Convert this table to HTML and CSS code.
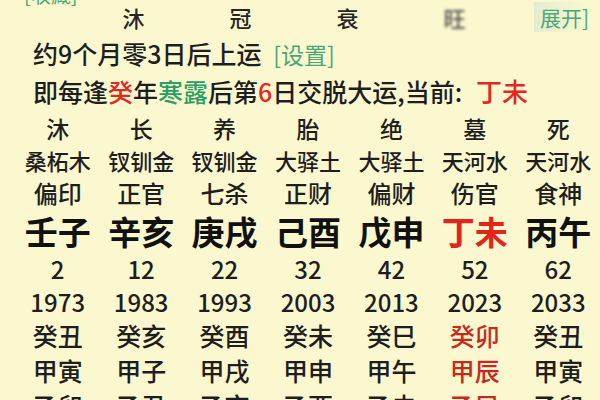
FILE: index.html
```html
<!DOCTYPE html>
<html lang="zh">
<head>
<meta charset="utf-8">
<link rel="stylesheet" href="styles.css">
</head>
<body>
<div class="page">
  <div class="hdr">
    <span class="tag fav">[收藏]</span>
    <span class="hc">沐</span>
    <span class="hc">冠</span>
    <span class="hc">衰</span>
    <span class="hc blur">旺</span>
    <span class="tag open">展开]</span>
  </div>
  <div class="line l1">约9个月零3日后上运 <span class="set">[设置]</span></div>
  <div class="line l2">即每逢<span class="red">癸</span>年<span class="green">寒露</span>后第<span class="red">6</span>日交脱大运,当前: <span class="cur">丁未</span></div>
  <div class="grid">
    <span class="c r1">沐</span><span class="c r1">长</span><span class="c r1">养</span><span class="c r1">胎</span><span class="c r1">绝</span><span class="c r1">墓</span><span class="c r1">死</span>
    <span class="c r2">桑柘木</span><span class="c r2">钗钏金</span><span class="c r2">钗钏金</span><span class="c r2">大驿土</span><span class="c r2">大驿土</span><span class="c r2">天河水</span><span class="c r2">天河水</span>
    <span class="c r3">偏印</span><span class="c r3">正官</span><span class="c r3">七杀</span><span class="c r3">正财</span><span class="c r3">偏财</span><span class="c r3">伤官</span><span class="c r3">食神</span>
    <span class="c r4">壬子</span><span class="c r4">辛亥</span><span class="c r4">庚戌</span><span class="c r4">己酉</span><span class="c r4">戊申</span><span class="c r4 hot">丁未</span><span class="c r4">丙午</span>
    <span class="c r5">2</span><span class="c r5">12</span><span class="c r5">22</span><span class="c r5">32</span><span class="c r5">42</span><span class="c r5">52</span><span class="c r5">62</span>
    <span class="c r6">1973</span><span class="c r6">1983</span><span class="c r6">1993</span><span class="c r6">2003</span><span class="c r6">2013</span><span class="c r6">2023</span><span class="c r6">2033</span>
    <span class="c r7">癸丑</span><span class="c r7">癸亥</span><span class="c r7">癸酉</span><span class="c r7">癸未</span><span class="c r7">癸巳</span><span class="c r7 now">癸卯</span><span class="c r7">癸丑</span>
    <span class="c r7">甲寅</span><span class="c r7">甲子</span><span class="c r7">甲戌</span><span class="c r7">甲申</span><span class="c r7">甲午</span><span class="c r7 now">甲辰</span><span class="c r7">甲寅</span>
    <span class="c r7">乙卯</span><span class="c r7">乙丑</span><span class="c r7">乙亥</span><span class="c r7">乙酉</span><span class="c r7">乙未</span><span class="c r7 now">乙巳</span><span class="c r7">乙卯</span>
  </div>
</div>
</body>
</html>
```
FILE: styles.css
```css
* { box-sizing: border-box; }
html, body { margin: 0; padding: 0; }
body {
  width: 600px;
  height: 400px;
  overflow: hidden;
  background: #fbf8cf;
  font-family: "Noto Sans CJK SC", "Noto Sans", sans-serif;
  font-weight: 500;
  color: #1e1e1e;
}
.page { width: 600px; }
.hdr {
  display: grid;
  grid-template-columns: 80px repeat(4, 107px) 1fr;
  grid-template-rows: 34px;
  height: 34px;
  align-items: center;
}
.hc {
  font-size: 22px;
  line-height: 30px;
  text-align: center;
  color: #262626;
}
.blur { filter: blur(1.5px); color: #555; }
.tag { color: #4aa776; font-size: 20px; white-space: nowrap; font-weight: 400; }
.fav {
  align-self: start;
  margin-top: -18px;
  margin-left: 24px;
  line-height: 26px;
}
.open {
  justify-self: start;
  margin-left: 26px;
  line-height: 30px;
  padding-left: 6px;
  font-size: 21px;
  background: linear-gradient(90deg, rgba(225,235,210,0.9), rgba(250,248,215,0));
}
.line {
  padding-left: 33px;
  font-size: 25px;
  white-space: nowrap;
}
.l1 { line-height: 38px; height: 38px; }
.l2 { line-height: 37px; height: 37px; }
.set { color: #4aa776; font-size: 23px; font-weight: 400; margin-left: 6px; }
.red { color: #e5271f; }
.green { color: #2a9f63; }
.cur { color: #e5271f; font-size: 26px; margin-left: 8px; }
.grid {
  margin-top: 5px;
  margin-left: 16px;
  width: 584px;
  display: grid;
  grid-template-columns: repeat(7, 1fr);
  grid-template-rows: 30px 32px 34px 42px 34px 33px 34px 35px 35px;
}
.c {
  text-align: center;
  display: flex;
  align-items: center;
  justify-content: center;
  white-space: nowrap;
  line-height: 1.1;
}
.r1 { font-size: 23px; }
.r2 { font-size: 22px; }
.r3 { font-size: 24px; }
.r4 { font-size: 33px; font-weight: 700; color: #111; }
.r5 { font-size: 24px; }
.r6 { font-size: 24px; }
.r7 { font-size: 25px; }
.hot { color: #e3231c; }
.now { color: #c8291f; }
```
